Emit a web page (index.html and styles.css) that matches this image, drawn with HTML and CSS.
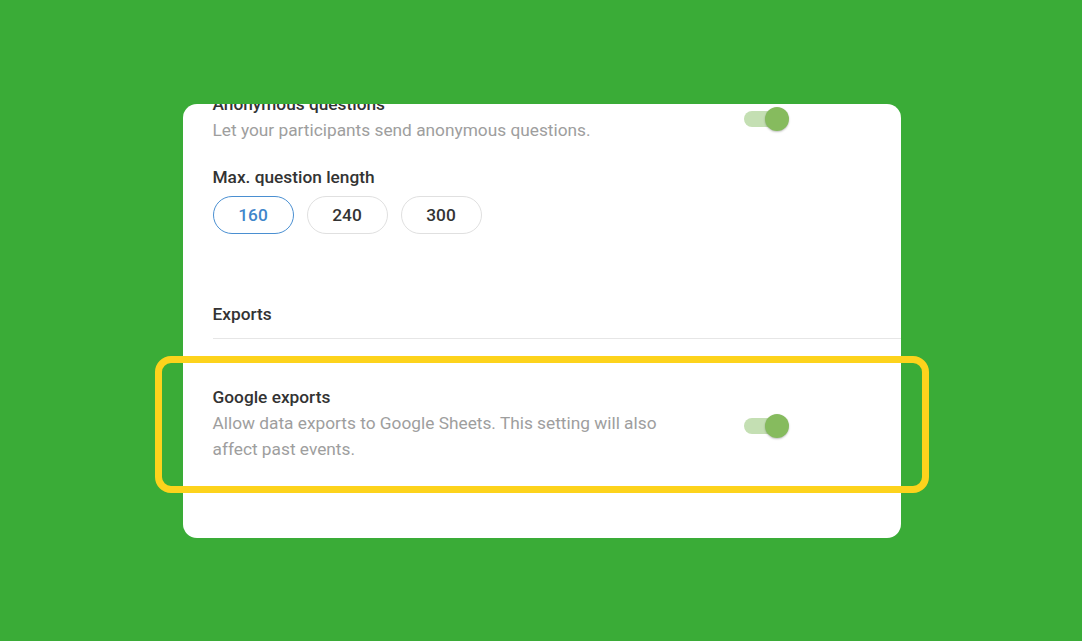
FILE: index.html
```html
<!DOCTYPE html>
<html lang="en">
<head>
    <meta charset="UTF-8">
    <meta name="viewport" content="width=device-width, initial-scale=1.0">
    <title>Settings</title>
    <link rel="stylesheet" href="styles.css">
</head>
<body>
    <div class="card-wrap">
        <div class="card">
            <div class="content">
                <div class="setting">
                    <div class="setting-text">
                        <div class="setting-title">Anonymous questions</div>
                        <div class="setting-desc">Let your participants send anonymous questions.</div>
                    </div>
                    <div class="toggle on"><span class="knob"></span></div>
                </div>

                <div class="field">
                    <div class="field-label">Max. question length</div>
                    <div class="chips">
                        <button class="chip selected">160</button>
                        <button class="chip">240</button>
                        <button class="chip">300</button>
                    </div>
                </div>

                <div class="section-title">Exports</div>

                <div class="setting export">
                    <div class="setting-text">
                        <div class="setting-title">Google exports</div>
                        <div class="setting-desc">Allow data exports to Google Sheets. This setting will also affect past events.</div>
                    </div>
                    <div class="toggle on"><span class="knob"></span></div>
                </div>
            </div>
        </div>
        <div class="highlight"></div>
    </div>
</body>
</html>
```

FILE: styles.css
```css
body {
    margin: 0;
    height: 100vh;
    display: flex;
    justify-content: center;
    align-items: center;
    background-color: #3aac37;
    font-family: Roboto, "Noto Sans", Arial, sans-serif;
}
.card-wrap {
    position: relative;
    margin-left: 1px;
    margin-top: 1px;
}
.card {
    width: 718px;
    height: 434px;
    background-color: #fff;
    border-radius: 14px;
    overflow: hidden;
}
.content {
    margin-top: -13px;
}
.setting {
    display: flex;
    align-items: center;
    padding-left: 30px;
}
.setting-text {
    flex: 0 0 470px;
    margin-right: 61px;
}
.setting-title {
    font-size: 17.3px;
    font-weight: 500;
    line-height: 26px;
    color: #333;
}
.setting-desc {
    font-size: 17.3px;
    line-height: 26px;
    color: #9e9e9e;
}
.toggle {
    position: relative;
    flex: 0 0 38px;
    height: 16px;
    border-radius: 8px;
    background-color: #c4dfb3;
    margin-top: 3px;
}
.toggle .knob {
    position: absolute;
    right: -7px;
    top: -4px;
    width: 24px;
    height: 24px;
    border-radius: 50%;
    background-color: #86bb5e;
    box-shadow: 0 1px 2px rgba(0, 0, 0, 0.25);
}
.field {
    padding-left: 30px;
    margin-top: 22px;
}
.field-label {
    font-size: 17.3px;
    font-weight: 500;
    line-height: 24px;
    color: #333;
}
.chips {
    display: flex;
    gap: 13px;
    margin-top: 7px;
}
.chip {
    width: 81px;
    height: 38px;
    border: 1px solid #e0e0e0;
    border-radius: 19px;
    background-color: #fff;
    font-family: inherit;
    font-size: 17.3px;
    font-weight: 500;
    color: #333;
    padding: 0;
}
.chip.selected {
    border-color: #4a8fd1;
    color: #3f86cb;
}
.section-title {
    margin-top: 68px;
    margin-left: 30px;
    padding-bottom: 12px;
    border-bottom: 1px solid #e6e6e6;
    font-size: 17.3px;
    font-weight: 500;
    line-height: 24px;
    color: #333;
}
.export {
    margin-top: 45px;
}
.export .toggle {
    margin-top: 6px;
}
.highlight {
    position: absolute;
    left: -28px;
    top: 252px;
    width: 774px;
    height: 137px;
    box-sizing: border-box;
    border: 7px solid #fdd31c;
    border-radius: 16px;
}
```
